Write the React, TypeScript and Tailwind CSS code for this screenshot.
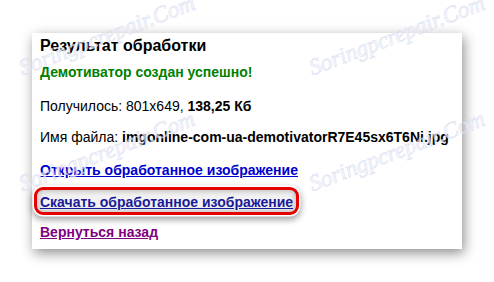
import React from "react";

const marks = [
  { left: 20, top: 52 },
  { left: 310, top: 52 },
  { left: 20, top: 168 },
  { left: 310, top: 168 },
];

export default function App() {
  return (
    <div className="relative w-[494px] h-[282px] bg-white overflow-hidden" style={{ fontFamily: '"Liberation Sans", Arial, sans-serif' }}>
      <div className="absolute left-[32px] top-[33px] w-[430px] h-[216px] bg-white shadow-[2px_4px_12px_rgba(0,0,0,0.45)]">
        <div className="flex flex-col pl-[8px] pt-[3px] text-[14px] leading-[17px] text-black">
          <div className="text-[16px] leading-[19px] font-bold">Результат обработки</div>
          <div className="mt-[9px] font-bold text-[#008000]">Демотиватор создан успешно!</div>
          <div className="mt-[17px]">
            Получилось: 801x649, <b>138,25 Кб</b>
          </div>
          <div className="mt-[14px]">
            Имя файла: <b>imgonline-com-ua-demotivatorR7E45sx6T6Ni.jpg</b>
          </div>
          <div className="mt-[16px] font-bold text-[#0000cc] underline">Открыть обработанное изображение</div>
          <div className="relative mt-[15px]">
            <div className="absolute left-[-6px] top-[-7px] w-[265px] h-[28px] rounded-[9px] border-[3px] border-[#e60000] bg-[#f2f2f2] shadow-[0_0_0_1.5px_#ffffff,0_3px_6px_2px_rgba(0,0,0,0.35),inset_0_0_5px_2px_rgba(0,0,0,0.18)]" />
            <div className="relative font-bold text-[#1a1a99] underline">Скачать обработанное изображение</div>
          </div>
          <div className="mt-[13px] font-bold text-[#800080] underline">Вернуться назад</div>
        </div>
      </div>
      {marks.map((m, i) => (
        <div
          key={i}
          className="absolute text-[23px] italic text-[#f4f5fc] pointer-events-none whitespace-nowrap"
          style={{
            left: m.left,
            top: m.top,
            transform: "rotate(-21deg)",
            transformOrigin: "left center",
            fontFamily: '"Liberation Serif", serif',
            WebkitTextStroke: "0.6px #d4d8ee",
            opacity: 0.75,
          }}
        >
          Soringpcrepair.Com
        </div>
      ))}
    </div>
  );
}
